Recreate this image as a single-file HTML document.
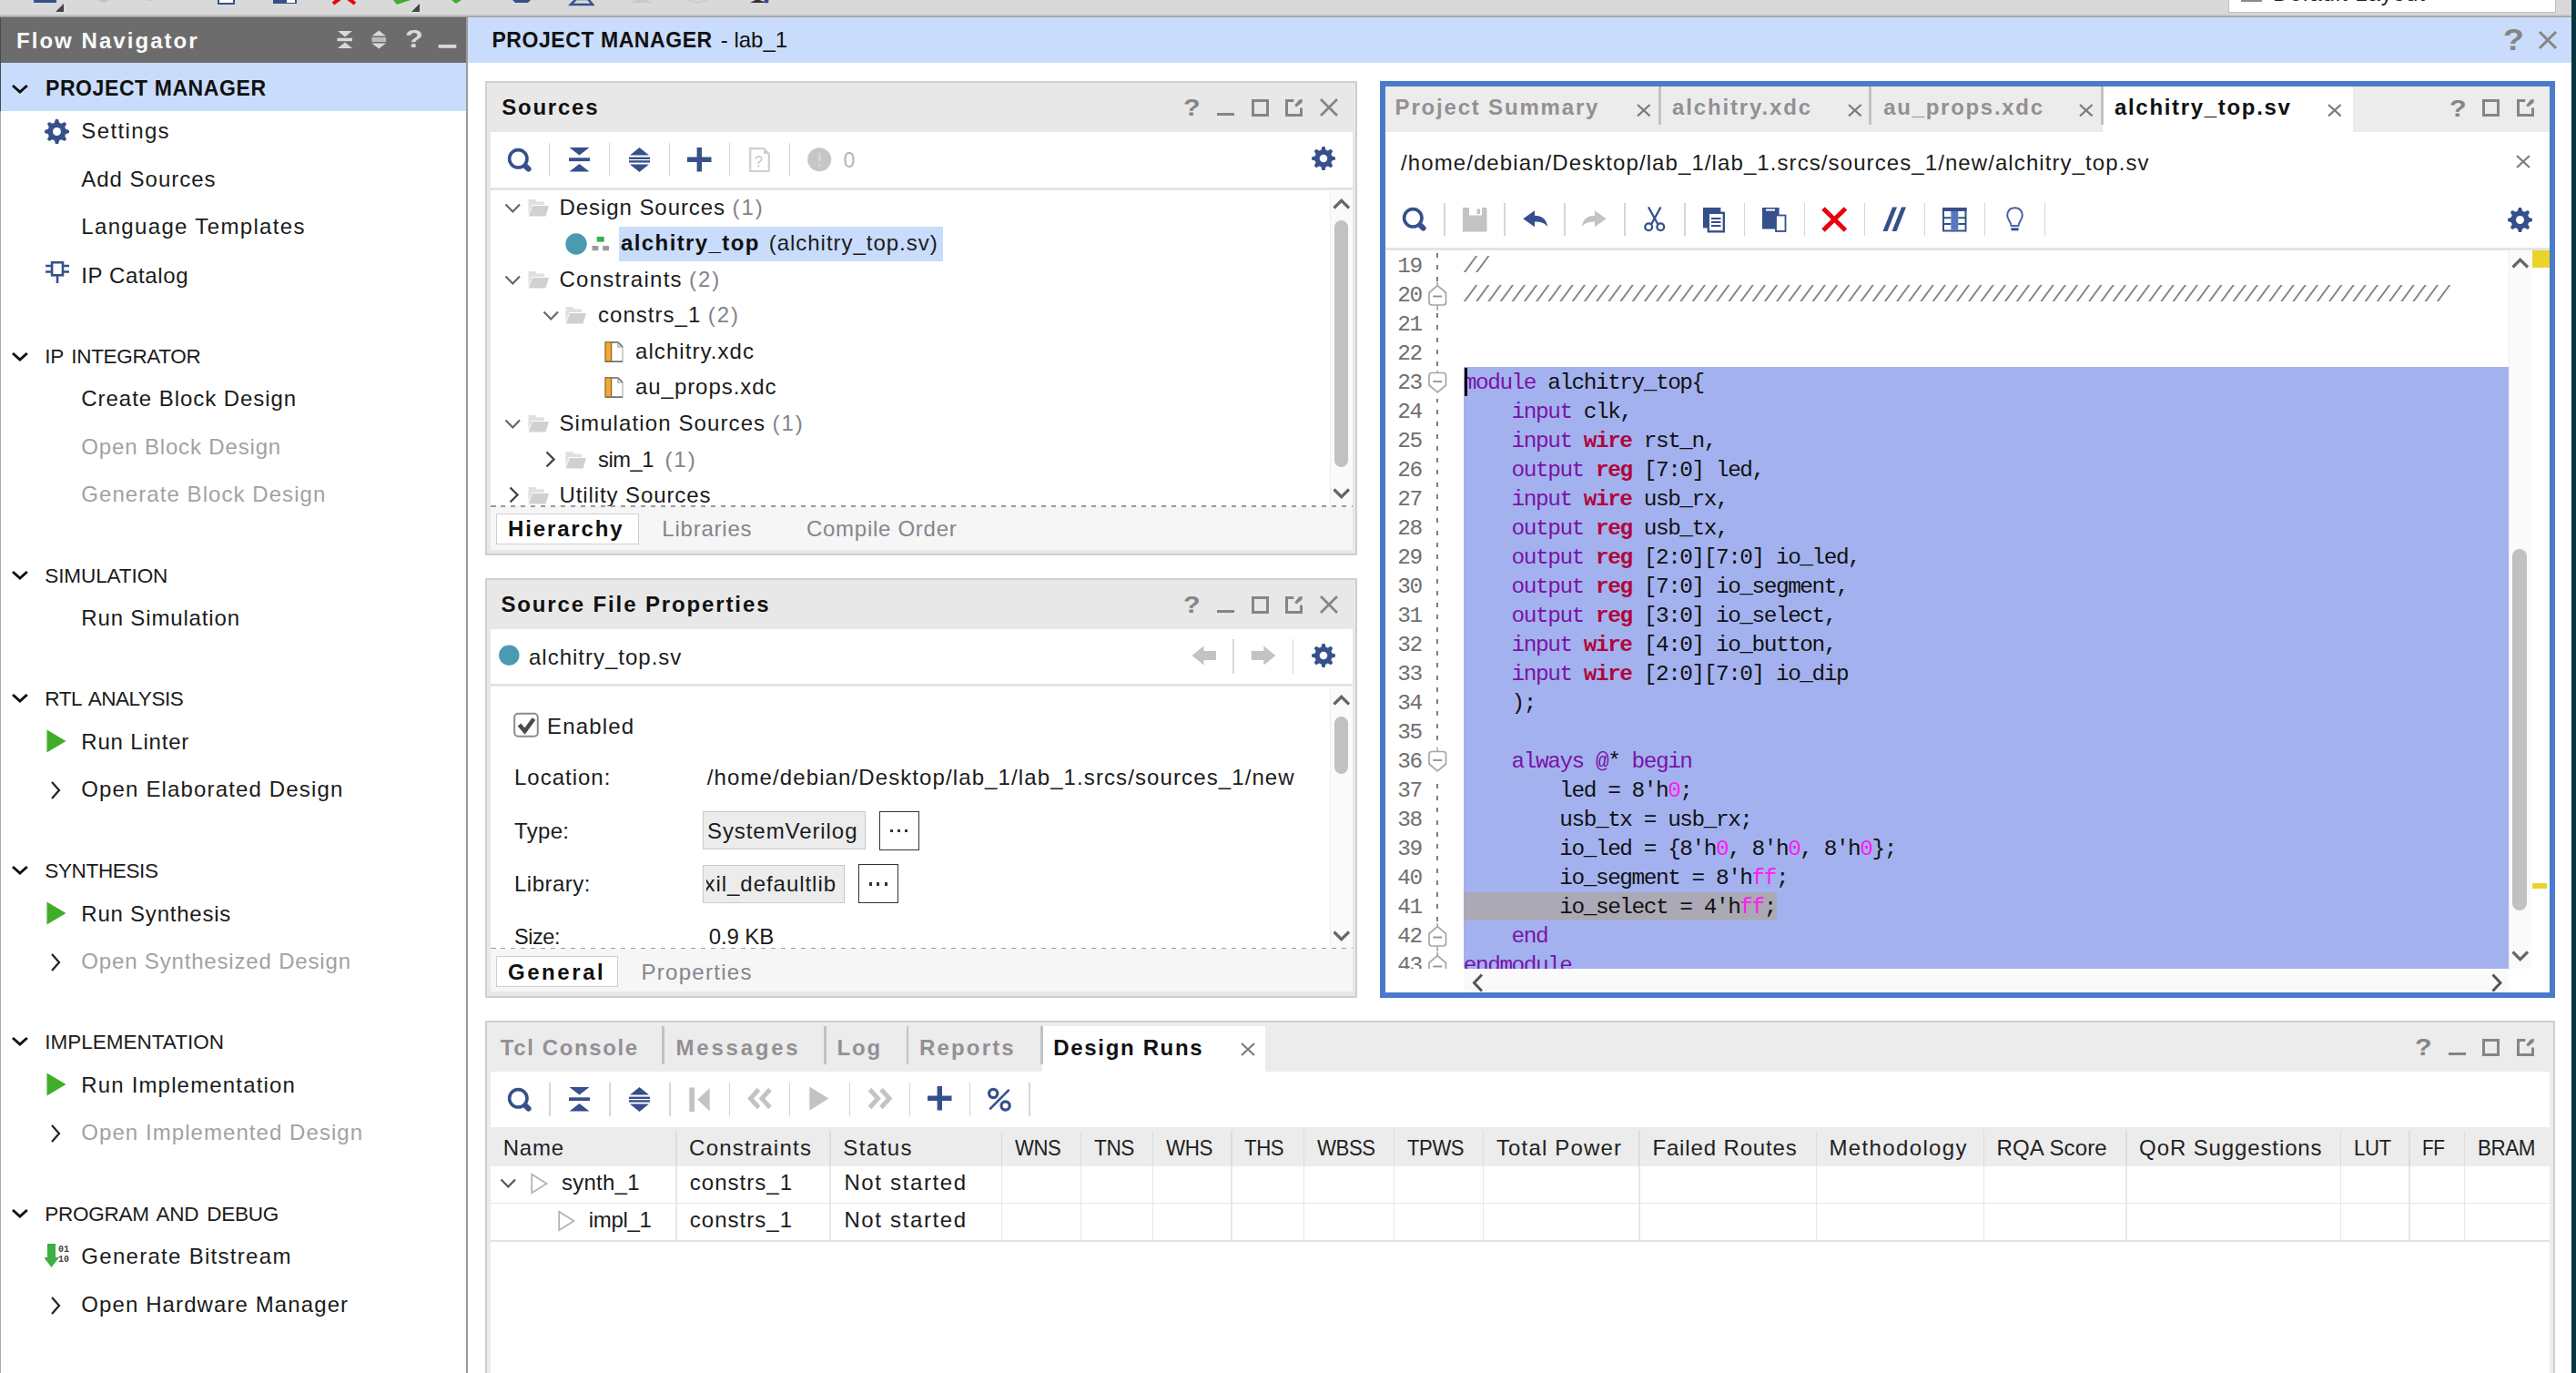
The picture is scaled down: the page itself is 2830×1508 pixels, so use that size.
<!DOCTYPE html>
<html><head><meta charset="utf-8"><title>Vivado</title>
<style>
html,body{margin:0;padding:0;}
html{width:2830px;height:1508px;overflow:hidden;}
body{width:2830px;height:1508px;position:relative;overflow:hidden;background:#fff;font-family:"Liberation Sans",sans-serif;}
div,svg{position:absolute;}
.t{white-space:pre;line-height:1;}
.m{white-space:pre;line-height:1;font-family:"Liberation Mono",monospace;font-size:24.4px;letter-spacing:-1.44px;}
.m b{color:#b0063c;}
.k{color:#7a12a6;}
.n{color:#ff1cf0;}
</style></head><body>
<div style="left:0px;top:0px;width:2830px;height:17px;background:#d9d9d9;"></div>
<div style="left:0px;top:16.3px;width:2830px;height:1.4px;background:#c2c2c2;"></div>
<div style="left:0px;top:17.5px;width:2830px;height:1.6px;background:#9a9a9a;"></div>
<svg style="left:0px;top:0px;" width="900" height="16" viewBox="0 0 900 16">
<rect x="37" y="0" width="25" height="3" fill="#36508c"/>
<path d="M70 4 L70 13 L61 13 Z" fill="#444"/>
<path d="M108 0 l6 3 l6 -3z" fill="#b9c0cf"/><path d="M160 0 l8 1" stroke="#c8c8c8"/>
<rect x="240" y="-2" width="17" height="6" fill="#fff" stroke="#36508c" stroke-width="2"/>
<rect x="300" y="-2" width="26" height="6" fill="#36508c"/><rect x="315" y="0" width="9" height="3" fill="#fff"/>
<path d="M366 4 L374 -2 M390 4 L382 -2" stroke="#e8000b" stroke-width="4"/>
<path d="M432 0 L451 0 L436 5 Z" fill="#3fae2a"/>
<path d="M461 4 L461 13 L452 13 Z" fill="#444"/>
<path d="M496 0 L507 0 L501 4 Z" fill="#3fae2a"/>
<path d="M563 0 h20 l-3 3 h-14 z" fill="#36508c"/>
<path d="M627 5 L633 -1 L646 -1 L651 5 Z" fill="none" stroke="#36508c" stroke-width="2.5"/>
<path d="M692 3 h24 l-6 -3 h-12z" fill="#c9c9c9"/>
<path d="M757 0 l8 3 l12 -3" fill="none" stroke="#cfcfcf" stroke-width="2"/>
<path d="M824 3 l8 -4 l10 4 z" fill="#333"/><circle cx="842" cy="1" r="2.5" fill="#36508c"/>
</svg>
<div style="left:2448px;top:0px;width:360px;height:14px;background:#ffffff;border:1.5px solid #bfbfbf;border-top:none;box-sizing:border-box;"></div>
<div style="left:2462px;top:0px;width:22.5px;height:2.2px;background:#8a8a8a;"></div>
<div class="t" style="left:2497px;top:-18.72px;font-size:24px;letter-spacing:0.942px;color:#222;">Default Layout</div>
<div style="left:0px;top:19px;width:512.2px;height:50.3px;background:#6c6c6c;"></div>
<div style="left:0px;top:69.3px;width:512.2px;height:53px;background:#c9dcfb;"></div>
<div style="left:512.1px;top:19px;width:1.9px;height:1489px;background:#9b9b9b;"></div>
<div style="left:0px;top:19px;width:1.3px;height:103px;background:#3d5058;"></div>
<div style="left:0px;top:122px;width:1.3px;height:1386px;background:#a4adb2;"></div>
<div class="t" style="left:18px;top:32.58px;font-size:24px;letter-spacing:2.045px;color:#fafafa;font-weight:bold;">Flow Navigator</div>
<svg style="left:366px;top:30px;" width="140" height="28" viewBox="0 0 140 28">
<path d="M5 4 H21 L13 10.5 Z M5 23 H21 L13 16.5 Z" fill="#d9d9d9"/><rect x="4.5" y="11.8" width="16.5" height="3.4" fill="#d9d9d9"/>
<path d="M42.5 9.5 H58 L50.2 3.5 Z M42.5 17.5 H58 L50.2 23.5 Z" fill="#d9d9d9"/><rect x="42.5" y="11" width="15.5" height="5" fill="#bcbcbc"/>
<rect x="115.7" y="19" width="19.6" height="3.8" fill="#d9d9d9"/>
</svg>
<div class="t" style="left:445px;top:30.04px;font-size:27px;letter-spacing:0.000px;color:#d9d9d9;font-weight:bold;transform:scaleX(1.2);transform-origin:0 0;">?</div>
<svg style="left:11.5px;top:92.3px;" width="19.8" height="13" viewBox="0 0 19.8 13"><path d="M2 2 L9.9 9 L17.8 2" fill="none" stroke="#111" stroke-width="3"/></svg>
<div class="t" style="left:50px;top:85.83px;font-size:23px;letter-spacing:0.581px;color:#111;font-weight:bold;">PROJECT MANAGER</div>
<div class="t" style="left:89.3px;top:132.48px;font-size:24px;letter-spacing:1.369px;color:#1b1b1b;">Settings</div>
<svg style="left:49px;top:130.8px;" width="27" height="27" viewBox="0 0 26 26"><path d="M11.51 0.09 L14.49 0.09 L15.59 3.65 L17.78 4.56 L21.08 2.81 L23.19 4.92 L21.44 8.22 L22.35 10.41 L25.91 11.51 L25.91 14.49 L22.35 15.59 L21.44 17.78 L23.19 21.08 L21.08 23.19 L17.78 21.44 L15.59 22.35 L14.49 25.91 L11.51 25.91 L10.41 22.35 L8.22 21.44 L4.92 23.19 L2.81 21.08 L4.56 17.78 L3.65 15.59 L0.09 14.49 L0.09 11.51 L3.65 10.41 L4.56 8.22 L2.81 4.92 L4.92 2.81 L8.22 4.56 L10.41 3.65Z" fill="#36508c"/><circle cx="13" cy="13" r="4.3" fill="#fff"/></svg>
<div class="t" style="left:89.3px;top:184.68px;font-size:24px;letter-spacing:0.978px;color:#1b1b1b;">Add Sources</div>
<div class="t" style="left:89.3px;top:237.28px;font-size:24px;letter-spacing:1.338px;color:#1b1b1b;">Language Templates</div>
<div class="t" style="left:89.3px;top:290.88px;font-size:24px;letter-spacing:0.631px;color:#1b1b1b;">IP Catalog</div>
<svg style="left:48.5px;top:285.2px;" width="31" height="31" viewBox="0 0 31 31"><g transform="scale(1.08)" fill="none" stroke="#36508c" stroke-width="2.4"><rect x="7.5" y="3" width="11" height="13"/><path d="M1 6.5 H7.5 M1 12.5 H7.5 M18.5 6.5 H25 M18.5 12.5 H25 M13 16 V24"/></g></svg>
<svg style="left:11.5px;top:385.7px;" width="19.8" height="13" viewBox="0 0 19.8 13"><path d="M2 2 L9.9 9 L17.8 2" fill="none" stroke="#111" stroke-width="3"/></svg>
<div class="t" style="left:49.3px;top:381.35px;font-size:22.5px;letter-spacing:-0.343px;color:#1b1b1b;word-spacing:3px;">IP INTEGRATOR</div>
<div class="t" style="left:89.3px;top:426.08px;font-size:24px;letter-spacing:0.953px;color:#1b1b1b;">Create Block Design</div>
<div class="t" style="left:89.3px;top:478.78px;font-size:24px;letter-spacing:0.842px;color:#a3a1a6;">Open Block Design</div>
<div class="t" style="left:89.3px;top:531.48px;font-size:24px;letter-spacing:1.061px;color:#a3a1a6;">Generate Block Design</div>
<svg style="left:11.5px;top:626.2px;" width="19.8" height="13" viewBox="0 0 19.8 13"><path d="M2 2 L9.9 9 L17.8 2" fill="none" stroke="#111" stroke-width="3"/></svg>
<div class="t" style="left:49.3px;top:621.85px;font-size:22.5px;letter-spacing:-0.094px;color:#1b1b1b;word-spacing:3px;">SIMULATION</div>
<div class="t" style="left:89.3px;top:667.48px;font-size:24px;letter-spacing:0.844px;color:#1b1b1b;">Run Simulation</div>
<svg style="left:11.5px;top:761.2px;" width="19.8" height="13" viewBox="0 0 19.8 13"><path d="M2 2 L9.9 9 L17.8 2" fill="none" stroke="#111" stroke-width="3"/></svg>
<div class="t" style="left:49.3px;top:756.85px;font-size:22.5px;letter-spacing:-0.476px;color:#1b1b1b;word-spacing:3px;">RTL ANALYSIS</div>
<div class="t" style="left:89.3px;top:802.78px;font-size:24px;letter-spacing:0.809px;color:#1b1b1b;">Run Linter</div>
<svg style="left:51px;top:800.8px;" width="24" height="26" viewBox="0 0 24 26"><path d="M0.5 0.5 L21.5 13 L0.5 25.5 Z" fill="#41ad2a"/></svg>
<div class="t" style="left:89.3px;top:855.48px;font-size:24px;letter-spacing:1.147px;color:#1b1b1b;">Open Elaborated Design</div>
<svg style="left:54.8px;top:857.3px;" width="14" height="22" viewBox="0 0 14 22"><path d="M2 2 L10 11 L2 20" fill="none" stroke="#222" stroke-width="2.2"/></svg>
<svg style="left:11.5px;top:950.2px;" width="19.8" height="13" viewBox="0 0 19.8 13"><path d="M2 2 L9.9 9 L17.8 2" fill="none" stroke="#111" stroke-width="3"/></svg>
<div class="t" style="left:49.3px;top:945.85px;font-size:22.5px;letter-spacing:-0.350px;color:#1b1b1b;word-spacing:3px;">SYNTHESIS</div>
<div class="t" style="left:89.3px;top:991.78px;font-size:24px;letter-spacing:0.772px;color:#1b1b1b;">Run Synthesis</div>
<svg style="left:51px;top:989.8px;" width="24" height="26" viewBox="0 0 24 26"><path d="M0.5 0.5 L21.5 13 L0.5 25.5 Z" fill="#41ad2a"/></svg>
<div class="t" style="left:89.3px;top:1044.48px;font-size:24px;letter-spacing:0.829px;color:#a3a1a6;">Open Synthesized Design</div>
<svg style="left:54.8px;top:1046.3px;" width="14" height="22" viewBox="0 0 14 22"><path d="M2 2 L10 11 L2 20" fill="none" stroke="#222" stroke-width="2.2"/></svg>
<svg style="left:11.5px;top:1138.2px;" width="19.8" height="13" viewBox="0 0 19.8 13"><path d="M2 2 L9.9 9 L17.8 2" fill="none" stroke="#111" stroke-width="3"/></svg>
<div class="t" style="left:49.3px;top:1133.85px;font-size:22.5px;letter-spacing:-0.006px;color:#1b1b1b;word-spacing:3px;">IMPLEMENTATION</div>
<div class="t" style="left:89.3px;top:1179.68px;font-size:24px;letter-spacing:1.161px;color:#1b1b1b;">Run Implementation</div>
<svg style="left:51px;top:1177.7px;" width="24" height="26" viewBox="0 0 24 26"><path d="M0.5 0.5 L21.5 13 L0.5 25.5 Z" fill="#41ad2a"/></svg>
<div class="t" style="left:89.3px;top:1232.48px;font-size:24px;letter-spacing:1.061px;color:#a3a1a6;">Open Implemented Design</div>
<svg style="left:54.8px;top:1234.3px;" width="14" height="22" viewBox="0 0 14 22"><path d="M2 2 L10 11 L2 20" fill="none" stroke="#222" stroke-width="2.2"/></svg>
<svg style="left:11.5px;top:1327.2px;" width="19.8" height="13" viewBox="0 0 19.8 13"><path d="M2 2 L9.9 9 L17.8 2" fill="none" stroke="#111" stroke-width="3"/></svg>
<div class="t" style="left:49.3px;top:1322.85px;font-size:22.5px;letter-spacing:-0.257px;color:#1b1b1b;word-spacing:3px;">PROGRAM AND DEBUG</div>
<div class="t" style="left:89.3px;top:1368.48px;font-size:24px;letter-spacing:1.294px;color:#1b1b1b;">Generate Bitstream</div>
<svg style="left:49px;top:1365.5px;" width="30" height="30" viewBox="0 0 30 30"><path d="M3 0 H12 V15 H16 L7.5 26 L-1 15 H3 Z" fill="#3fae45"/><g fill="#444" font-family="Liberation Mono" font-size="10" font-weight="bold"><text x="15" y="9">01</text><text x="15" y="20">10</text></g></svg>
<div class="t" style="left:89.3px;top:1421.28px;font-size:24px;letter-spacing:1.100px;color:#1b1b1b;">Open Hardware Manager</div>
<svg style="left:54.8px;top:1423.1px;" width="14" height="22" viewBox="0 0 14 22"><path d="M2 2 L10 11 L2 20" fill="none" stroke="#222" stroke-width="2.2"/></svg>
<div style="left:514px;top:19px;width:2312px;height:50.4px;background:#c9dcfb;"></div>
<div style="left:2825px;top:0px;width:5px;height:1508px;background:#0b3442;"></div>
<div class="t" style="left:540.4px;top:32.53px;font-size:23px;letter-spacing:0.567px;color:#111;font-weight:bold;">PROJECT MANAGER</div>
<div class="t" style="left:791.7px;top:31.68px;font-size:24px;letter-spacing:0.021px;color:#111;">- lab_1</div>
<div class="t" style="left:2750px;top:26.84px;font-size:33.5px;color:#858585;font-weight:bold;transform:scaleX(1.12);transform-origin:0 0;">?</div>
<svg style="left:2788px;top:32.8px;" width="22" height="22" viewBox="0 0 22 22"><path d="M2 2 L20 20 M20 2 L2 20" stroke="#858585" stroke-width="3" fill="none"/></svg>
<div style="left:533px;top:88.5px;width:958.4px;height:521.5px;background:#e8e8e8;border:2px solid #cfcfcf;box-sizing:border-box;"></div>
<div style="left:538.5px;top:145px;width:947.4px;height:458.5px;background:#fff;"></div>
<div class="t" style="left:551.2px;top:105.68px;font-size:24px;letter-spacing:1.783px;color:#111;font-weight:bold;">Sources</div>
<div class="t" style="left:1300px;top:106.44px;font-size:25px;color:#858585;font-weight:bold;transform:scaleX(1.22);transform-origin:0 0;">?</div>
<div style="left:1337px;top:124.1px;width:19px;height:3px;background:#858585;"></div>
<div style="left:1374.6px;top:108.6px;width:19px;height:19px;background:transparent;border:3px solid #858585;box-sizing:border-box;"></div>
<svg style="left:1412px;top:107.6px;" width="21" height="21" viewBox="0 0 21 21"><path d="M9.3 2.5 H1.5 V18.5 H17.5 V10.5" fill="none" stroke="#858585" stroke-width="3"/><path d="M10.3 7.6 L15.2 1.6 L19 1 L18.4 4.8 L12.2 9.4 Z" fill="#858585"/></svg>
<svg style="left:1448.5px;top:107.1px;" width="22" height="22" viewBox="0 0 22 22"><path d="M2 2 L20 20 M20 2 L2 20" stroke="#858585" stroke-width="2.8" fill="none"/></svg>
<svg style="left:557.3px;top:161.7px;" width="30" height="30" viewBox="0 0 30 30"><circle cx="12.3" cy="12.3" r="9.7" fill="none" stroke="#36508c" stroke-width="3.6"/><path d="M20.3 20.3 L23.6 23.6" stroke="#36508c" stroke-width="6" stroke-linecap="round"/></svg>
<svg style="left:625.3px;top:162px;" width="24" height="28" viewBox="0 0 24 28"><path d="M0.5 0 H22.5 L11.5 8.5 Z M0.5 26.5 H22.5 L11.5 18 Z" fill="#36508c"/><rect x="0" y="11.3" width="23" height="3.8" fill="#36508c"/></svg>
<svg style="left:691px;top:162px;" width="24" height="28" viewBox="0 0 24 28"><path d="M1 8.5 H22 L11.5 0 Z M1 18.5 H22 L11.5 27 Z" fill="#36508c"/><rect x="0" y="10.6" width="23" height="2.4" fill="#36508c"/><rect x="0" y="14.2" width="23" height="2.4" fill="#36508c"/></svg>
<svg style="left:755px;top:161.8px;" width="27" height="27" viewBox="0 0 27 27"><path d="M13.3 0 V26.5 M0 13.3 H26.5" stroke="#36508c" stroke-width="5.4"/></svg>
<div style="left:602.8px;top:156.7px;width:1.6px;height:36.7px;background:#d6d6d6;"></div>
<div style="left:668.8px;top:156.7px;width:1.6px;height:36.7px;background:#d6d6d6;"></div>
<div style="left:734.8px;top:156.7px;width:1.6px;height:36.7px;background:#d6d6d6;"></div>
<div style="left:800.8px;top:156.7px;width:1.6px;height:36.7px;background:#d6d6d6;"></div>
<div style="left:866.8px;top:156.7px;width:1.6px;height:36.7px;background:#d6d6d6;"></div>
<svg style="left:823px;top:161.5px;" width="24" height="28" viewBox="0 0 24 28"><path d="M1.2 1.2 H16 L21.8 7 V26 H1.2 Z" fill="#fff" stroke="#cfcfcf" stroke-width="2.2"/><path d="M16 1.2 V7 H21.8 Z" fill="#cfcfcf"/><text x="6" y="21" font-family="Liberation Sans" font-size="16" fill="#c4c4c4">?</text></svg>
<svg style="left:887px;top:162px;" width="27" height="27" viewBox="0 0 27 27"><circle cx="13.2" cy="13.2" r="13" fill="#c6c6c6"/><rect x="12" y="6" width="2.6" height="9.5" fill="#d6d6d6"/><rect x="12" y="18" width="2.6" height="2.8" fill="#d6d6d6"/></svg>
<div class="t" style="left:926.5px;top:164.83px;font-size:23px;letter-spacing:0.000px;color:#b4b4b4;">0</div>
<svg style="left:1441px;top:161.3px;" width="26" height="26" viewBox="0 0 26 26"><path d="M11.51 0.09 L14.49 0.09 L15.59 3.65 L17.78 4.56 L21.08 2.81 L23.19 4.92 L21.44 8.22 L22.35 10.41 L25.91 11.51 L25.91 14.49 L22.35 15.59 L21.44 17.78 L23.19 21.08 L21.08 23.19 L17.78 21.44 L15.59 22.35 L14.49 25.91 L11.51 25.91 L10.41 22.35 L8.22 21.44 L4.92 23.19 L2.81 21.08 L4.56 17.78 L3.65 15.59 L0.09 14.49 L0.09 11.51 L3.65 10.41 L4.56 8.22 L2.81 4.92 L4.92 2.81 L8.22 4.56 L10.41 3.65Z" fill="#36508c"/><circle cx="13" cy="13" r="4.3" fill="#fff"/></svg>
<div style="left:538.5px;top:205.9px;width:947px;height:3px;background:#e4e4e4;"></div>
<div style="left:679.7px;top:249px;width:356px;height:38px;background:#c9dcfb;"></div>
<svg style="left:553.5px;top:222.8px;" width="20" height="12" viewBox="0 0 20 12"><path d="M1.5 1.5 L9.3 9.5 L17 1.5" fill="none" stroke="#666" stroke-width="2.2"/></svg>
<svg style="left:580px;top:217.8px;" width="24" height="21" viewBox="0 0 24 21"><path d="M0.5 1 H8 L10 3.5 H18 V7 H4.5 L0.5 18 Z" fill="#e0e0e0"/><path d="M5 8 H23 L19.5 19.5 H0.8 Z" fill="#d0d0d0"/></svg>
<div class="t" style="left:614.5px;top:215.68px;font-size:24px;letter-spacing:0.935px;color:#1b1b1b;">Design Sources</div>
<div class="t" style="left:804.531px;top:215.68px;font-size:24px;letter-spacing:1.977px;color:#85828c;">(1)</div>
<svg style="left:620.5px;top:255.35px;" width="50" height="26" viewBox="0 0 50 26"><circle cx="12" cy="13" r="11.7" fill="#4a9bb1"/><rect x="34.7" y="5" width="8" height="5.6" fill="#35b04f"/><rect x="29.5" y="15" width="6.8" height="5.2" fill="#9a9a9a"/><rect x="41.2" y="15" width="6.8" height="5.2" fill="#9a9a9a"/></svg>
<div class="t" style="left:682px;top:255.23px;font-size:24px;letter-spacing:1.406px;color:#111;font-weight:bold;">alchitry_top</div>
<div class="t" style="left:844.7px;top:255.23px;font-size:24px;letter-spacing:0.976px;color:#1b1b1b;">(alchitry_top.sv)</div>
<svg style="left:553.5px;top:301.9px;" width="20" height="12" viewBox="0 0 20 12"><path d="M1.5 1.5 L9.3 9.5 L17 1.5" fill="none" stroke="#666" stroke-width="2.2"/></svg>
<svg style="left:580px;top:296.9px;" width="24" height="21" viewBox="0 0 24 21"><path d="M0.5 1 H8 L10 3.5 H18 V7 H4.5 L0.5 18 Z" fill="#e0e0e0"/><path d="M5 8 H23 L19.5 19.5 H0.8 Z" fill="#d0d0d0"/></svg>
<div class="t" style="left:614.5px;top:294.78px;font-size:24px;letter-spacing:1.272px;color:#1b1b1b;">Constraints</div>
<div class="t" style="left:757.062px;top:294.78px;font-size:24px;letter-spacing:1.977px;color:#85828c;">(2)</div>
<svg style="left:595.5px;top:341.45px;" width="20" height="12" viewBox="0 0 20 12"><path d="M1.5 1.5 L9.3 9.5 L17 1.5" fill="none" stroke="#666" stroke-width="2.2"/></svg>
<svg style="left:620.5px;top:336.45px;" width="24" height="21" viewBox="0 0 24 21"><path d="M0.5 1 H8 L10 3.5 H18 V7 H4.5 L0.5 18 Z" fill="#e0e0e0"/><path d="M5 8 H23 L19.5 19.5 H0.8 Z" fill="#d0d0d0"/></svg>
<div class="t" style="left:657px;top:334.33px;font-size:24px;letter-spacing:1.027px;color:#1b1b1b;">constrs_1</div>
<div class="t" style="left:777.734px;top:334.33px;font-size:24px;letter-spacing:1.977px;color:#85828c;">(2)</div>
<svg style="left:663.5px;top:374.7px;" width="22" height="24" viewBox="0 0 22 24"><path d="M7 1 H15 L20 6 V22 H7 Z" fill="#fff" stroke="#c4c4c4" stroke-width="1.6"/><path d="M7 1 H15 L20 6" fill="none" stroke="#6f6f6f" stroke-width="1.5"/><path d="M15 1 V6 H20" fill="none" stroke="#9a9a9a" stroke-width="1.2"/><path d="M1 22.2 H20" stroke="#6f6f6f" stroke-width="1.6"/><rect x="1" y="0.8" width="6.6" height="21.2" fill="#f5a82f" stroke="#8a6a3a" stroke-width="1.3"/></svg>
<div class="t" style="left:698px;top:373.88px;font-size:24px;letter-spacing:1.068px;color:#1b1b1b;">alchitry.xdc</div>
<svg style="left:663.5px;top:414.25px;" width="22" height="24" viewBox="0 0 22 24"><path d="M7 1 H15 L20 6 V22 H7 Z" fill="#fff" stroke="#c4c4c4" stroke-width="1.6"/><path d="M7 1 H15 L20 6" fill="none" stroke="#6f6f6f" stroke-width="1.5"/><path d="M15 1 V6 H20" fill="none" stroke="#9a9a9a" stroke-width="1.2"/><path d="M1 22.2 H20" stroke="#6f6f6f" stroke-width="1.6"/><rect x="1" y="0.8" width="6.6" height="21.2" fill="#f5a82f" stroke="#8a6a3a" stroke-width="1.3"/></svg>
<div class="t" style="left:698px;top:413.43px;font-size:24px;letter-spacing:0.947px;color:#1b1b1b;">au_props.xdc</div>
<svg style="left:553.5px;top:460.1px;" width="20" height="12" viewBox="0 0 20 12"><path d="M1.5 1.5 L9.3 9.5 L17 1.5" fill="none" stroke="#666" stroke-width="2.2"/></svg>
<svg style="left:580px;top:455.1px;" width="24" height="21" viewBox="0 0 24 21"><path d="M0.5 1 H8 L10 3.5 H18 V7 H4.5 L0.5 18 Z" fill="#e0e0e0"/><path d="M5 8 H23 L19.5 19.5 H0.8 Z" fill="#d0d0d0"/></svg>
<div class="t" style="left:614.5px;top:452.98px;font-size:24px;letter-spacing:1.108px;color:#1b1b1b;">Simulation Sources</div>
<div class="t" style="left:848.578px;top:452.98px;font-size:24px;letter-spacing:1.977px;color:#85828c;">(1)</div>
<svg style="left:599px;top:494.85px;" width="12" height="20" viewBox="0 0 12 20"><path d="M1.5 1.5 L9.5 9.5 L1.5 17.5" fill="none" stroke="#444" stroke-width="2.4"/></svg>
<svg style="left:620.5px;top:494.65px;" width="24" height="21" viewBox="0 0 24 21"><path d="M0.5 1 H8 L10 3.5 H18 V7 H4.5 L0.5 18 Z" fill="#e0e0e0"/><path d="M5 8 H23 L19.5 19.5 H0.8 Z" fill="#d0d0d0"/></svg>
<div class="t" style="left:657px;top:492.53px;font-size:24px;letter-spacing:-0.450px;color:#1b1b1b;transform:scaleX(0.9885);transform-origin:0 0;">sim_1</div>
<div class="t" style="left:730.4px;top:492.53px;font-size:24px;letter-spacing:1.977px;color:#85828c;">(1)</div>
<div style="left:538.5px;top:530px;width:922px;height:26px;overflow:hidden;">
<svg style="left:20.5px;top:4.4px;" width="12" height="20" viewBox="0 0 12 20"><path d="M1.5 1.5 L9.5 9.5 L1.5 17.5" fill="none" stroke="#444" stroke-width="2.4"/></svg>
<svg style="left:41.5px;top:4.2px;" width="24" height="21" viewBox="0 0 24 21"><path d="M0.5 1 H8 L10 3.5 H18 V7 H4.5 L0.5 18 Z" fill="#e0e0e0"/><path d="M5 8 H23 L19.5 19.5 H0.8 Z" fill="#d0d0d0"/></svg>
<div class="t" style="left:76px;top:2.08px;font-size:24px;letter-spacing:0.902px;color:#1b1b1b;">Utility Sources</div>
</div>
<div style="left:1461px;top:209.5px;width:25px;height:346.5px;background:#fafafa;border-left:1px solid #ececec;box-sizing:border-box;"></div>
<svg style="left:1464.2px;top:217.8px;" width="20" height="13" viewBox="0 0 20 13"><path d="M1.5 10.5 L9.7 2.3 L18 10.5" fill="none" stroke="#666" stroke-width="3.2"/></svg>
<svg style="left:1464.2px;top:536.3px;" width="20" height="13" viewBox="0 0 20 13"><path d="M1.5 1.5 L9.7 9.7 L18 1.5" fill="none" stroke="#666" stroke-width="3.2"/></svg>
<div style="left:1465.7px;top:241.7px;width:15.5px;height:270.9px;background:#c1c1c1;border-radius:8px;"></div>
<div style="left:538.5px;top:556px;width:947px;height:47.5px;background:#f6f6f6;"></div>
<div style="left:538.5px;top:555.2px;width:947px;height:1.6px;background:transparent;background-image:repeating-linear-gradient(90deg,#9a9a9a 0 5.5px,transparent 5.5px 11px);"></div>
<div style="left:544.7px;top:564px;width:157px;height:34.2px;background:#fff;border:1.3px solid #cfcfcf;box-sizing:border-box;"></div>
<div class="t" style="left:558px;top:569.48px;font-size:24px;letter-spacing:1.860px;color:#111;font-weight:bold;">Hierarchy</div>
<div class="t" style="left:727.3px;top:569.48px;font-size:24px;letter-spacing:0.771px;color:#88848c;">Libraries</div>
<div class="t" style="left:886px;top:569.48px;font-size:24px;letter-spacing:0.721px;color:#88848c;">Compile Order</div>
<div style="left:533px;top:635px;width:958.4px;height:460.5px;background:#e8e8e8;border:2px solid #cfcfcf;box-sizing:border-box;"></div>
<div style="left:538.5px;top:691px;width:947.4px;height:398px;background:#fff;"></div>
<div class="t" style="left:550.4px;top:651.88px;font-size:24px;letter-spacing:1.873px;color:#111;font-weight:bold;">Source File Properties</div>
<div class="t" style="left:1300px;top:652.44px;font-size:25px;color:#858585;font-weight:bold;transform:scaleX(1.22);transform-origin:0 0;">?</div>
<div style="left:1337px;top:670.1px;width:19px;height:3px;background:#858585;"></div>
<div style="left:1374.6px;top:654.6px;width:19px;height:19px;background:transparent;border:3px solid #858585;box-sizing:border-box;"></div>
<svg style="left:1412px;top:653.6px;" width="21" height="21" viewBox="0 0 21 21"><path d="M9.3 2.5 H1.5 V18.5 H17.5 V10.5" fill="none" stroke="#858585" stroke-width="3"/><path d="M10.3 7.6 L15.2 1.6 L19 1 L18.4 4.8 L12.2 9.4 Z" fill="#858585"/></svg>
<svg style="left:1448.5px;top:653.1px;" width="22" height="22" viewBox="0 0 22 22"><path d="M2 2 L20 20 M20 2 L2 20" stroke="#858585" stroke-width="2.8" fill="none"/></svg>
<svg style="left:548.3px;top:708px;" width="24" height="24" viewBox="0 0 24 24"><circle cx="11.3" cy="11.7" r="11.2" fill="#4a9bb1"/></svg>
<div class="t" style="left:581px;top:709.98px;font-size:24px;letter-spacing:0.994px;color:#1b1b1b;">alchitry_top.sv</div>
<svg style="left:1309px;top:708px;" width="28" height="24" viewBox="0 0 28 24"><path d="M0.5 12 L13.5 1.5 V7 H27 V17 H13.5 V22.5 Z" fill="#c3c3c3"/></svg>
<svg style="left:1374px;top:708px;" width="28" height="24" viewBox="0 0 28 24"><path d="M27.3 12 L14.3 1.5 V7 H0.8 V17 H14.3 V22.5 Z" fill="#c3c3c3"/></svg>
<div style="left:1354.2px;top:701.5px;width:1.6px;height:38px;background:#d6d6d6;"></div>
<div style="left:1419.7px;top:701.5px;width:1.6px;height:38px;background:#d6d6d6;"></div>
<svg style="left:1440.8px;top:707px;" width="26" height="26" viewBox="0 0 26 26"><path d="M11.51 0.09 L14.49 0.09 L15.59 3.65 L17.78 4.56 L21.08 2.81 L23.19 4.92 L21.44 8.22 L22.35 10.41 L25.91 11.51 L25.91 14.49 L22.35 15.59 L21.44 17.78 L23.19 21.08 L21.08 23.19 L17.78 21.44 L15.59 22.35 L14.49 25.91 L11.51 25.91 L10.41 22.35 L8.22 21.44 L4.92 23.19 L2.81 21.08 L4.56 17.78 L3.65 15.59 L0.09 14.49 L0.09 11.51 L3.65 10.41 L4.56 8.22 L2.81 4.92 L4.92 2.81 L8.22 4.56 L10.41 3.65Z" fill="#36508c"/><circle cx="13" cy="13" r="4.3" fill="#fff"/></svg>
<div style="left:538.5px;top:751px;width:947px;height:3px;background:#e4e4e4;"></div>
<div style="left:1461px;top:754.5px;width:25px;height:287.2px;background:#fafafa;border-left:1px solid #ececec;box-sizing:border-box;"></div>
<svg style="left:1464.2px;top:762.8px;" width="20" height="13" viewBox="0 0 20 13"><path d="M1.5 10.5 L9.7 2.3 L18 10.5" fill="none" stroke="#666" stroke-width="3.2"/></svg>
<svg style="left:1464.2px;top:1022px;" width="20" height="13" viewBox="0 0 20 13"><path d="M1.5 1.5 L9.7 9.7 L18 1.5" fill="none" stroke="#666" stroke-width="3.2"/></svg>
<div style="left:1465.7px;top:787.4px;width:15.5px;height:62.8px;background:#c1c1c1;border-radius:8px;"></div>
<svg style="left:564px;top:782px;" width="30" height="30" viewBox="0 0 30 30"><rect x="1.2" y="1.8" width="25.6" height="25" rx="4" fill="#fff" stroke="#8c8c8c" stroke-width="2"/><path d="M6.5 14 L12.5 21 L22.5 7.5" fill="none" stroke="#4a4a4a" stroke-width="4.6"/></svg>
<div class="t" style="left:601px;top:786.08px;font-size:24px;letter-spacing:1.156px;color:#1b1b1b;">Enabled</div>
<div class="t" style="left:565px;top:842.38px;font-size:24px;letter-spacing:0.989px;color:#1b1b1b;">Location:</div>
<div class="t" style="left:776.8px;top:842.38px;font-size:24px;letter-spacing:1.103px;color:#1b1b1b;">/home/debian/Desktop/lab_1/lab_1.srcs/sources_1/new</div>
<div class="t" style="left:565px;top:900.68px;font-size:24px;letter-spacing:0.328px;color:#1b1b1b;">Type:</div>
<div style="left:772.2px;top:891.4px;width:178.8px;height:42px;background:#ececec;border:1.3px solid #c9c9c9;box-sizing:border-box;"></div>
<div class="t" style="left:777px;top:900.68px;font-size:24px;letter-spacing:0.924px;color:#1b1b1b;">SystemVerilog</div>
<div style="left:966px;top:890.7px;width:43.6px;height:43.3px;background:#fff;border:1.6px solid #333;box-sizing:border-box;"></div>
<div style="left:977.6px;top:910.95px;width:3.2px;height:3.2px;background:#333;"></div>
<div style="left:985.9px;top:910.95px;width:3.2px;height:3.2px;background:#333;"></div>
<div style="left:994.2px;top:910.95px;width:3.2px;height:3.2px;background:#333;"></div>
<div class="t" style="left:565px;top:959.38px;font-size:24px;letter-spacing:0.496px;color:#1b1b1b;">Library:</div>
<div style="left:772.2px;top:949.6px;width:156px;height:42px;background:#ececec;border:1.3px solid #c9c9c9;box-sizing:border-box;"></div>
<div style="left:776px;top:952px;width:150px;height:38px;overflow:hidden;">
<div class="t" style="left:-2.5px;top:7.38px;font-size:24px;letter-spacing:0.958px;color:#1b1b1b;">xil_defaultlib</div>
</div>
<div style="left:943.4px;top:949.2px;width:43.6px;height:43.3px;background:#fff;border:1.6px solid #333;box-sizing:border-box;"></div>
<div style="left:955px;top:969.45px;width:3.2px;height:3.2px;background:#333;"></div>
<div style="left:963.3px;top:969.45px;width:3.2px;height:3.2px;background:#333;"></div>
<div style="left:971.6px;top:969.45px;width:3.2px;height:3.2px;background:#333;"></div>
<div style="left:538.5px;top:1010px;width:922px;height:31px;overflow:hidden;">
<div class="t" style="left:26.5px;top:6.98px;font-size:24px;letter-spacing:-0.450px;color:#1b1b1b;transform:scaleX(0.9795);transform-origin:0 0;">Size:</div>
<div class="t" style="left:240.2px;top:6.98px;font-size:24px;letter-spacing:-0.113px;color:#1b1b1b;">0.9 KB</div>
</div>
<div style="left:538.5px;top:1041.7px;width:947px;height:47.5px;background:#f6f6f6;"></div>
<div style="left:538.5px;top:1040.9px;width:947px;height:1.6px;background:transparent;background-image:repeating-linear-gradient(90deg,#9a9a9a 0 5.5px,transparent 5.5px 11px);"></div>
<div style="left:544.7px;top:1050.4px;width:134.3px;height:33.6px;background:#fff;border:1.3px solid #cfcfcf;box-sizing:border-box;"></div>
<div class="t" style="left:558px;top:1055.98px;font-size:24px;letter-spacing:2.554px;color:#111;font-weight:bold;">General</div>
<div class="t" style="left:704.5px;top:1055.98px;font-size:24px;letter-spacing:1.290px;color:#88848c;">Properties</div>
<div style="left:1516px;top:88.5px;width:1291px;height:1007.5px;background:#fff;border:6px solid #4a7acb;box-sizing:border-box;"></div>
<div style="left:1522px;top:94.5px;width:1279px;height:50.5px;background:#ececec;"></div>
<div style="left:2310px;top:94.5px;width:274.5px;height:50.5px;background:#fff;"></div>
<div class="t" style="left:1532.6px;top:105.98px;font-size:24px;letter-spacing:1.812px;color:#948f95;font-weight:bold;">Project Summary</div>
<div class="t" style="left:1837px;top:105.98px;font-size:24px;letter-spacing:1.854px;color:#948f95;font-weight:bold;">alchitry.xdc</div>
<div class="t" style="left:2069.3px;top:105.98px;font-size:24px;letter-spacing:1.699px;color:#948f95;font-weight:bold;">au_props.xdc</div>
<div class="t" style="left:2323px;top:105.98px;font-size:24px;letter-spacing:1.679px;color:#111;font-weight:bold;">alchitry_top.sv</div>
<svg style="left:1797.3px;top:112.8px;" width="17.6" height="16.4" viewBox="0 0 17.6 16.4"><path d="M2 2 L15.6 14.4 M15.6 2 L2 14.4" stroke="#7c7c7c" stroke-width="2.2" fill="none"/></svg>
<svg style="left:2028.6px;top:112.8px;" width="17.6" height="16.4" viewBox="0 0 17.6 16.4"><path d="M2 2 L15.6 14.4 M15.6 2 L2 14.4" stroke="#7c7c7c" stroke-width="2.2" fill="none"/></svg>
<svg style="left:2282.8px;top:112.8px;" width="17.6" height="16.4" viewBox="0 0 17.6 16.4"><path d="M2 2 L15.6 14.4 M15.6 2 L2 14.4" stroke="#7c7c7c" stroke-width="2.2" fill="none"/></svg>
<svg style="left:2555.8px;top:112.8px;" width="17.6" height="16.4" viewBox="0 0 17.6 16.4"><path d="M2 2 L15.6 14.4 M15.6 2 L2 14.4" stroke="#7c7c7c" stroke-width="2.2" fill="none"/></svg>
<div style="left:1821.5px;top:95px;width:3px;height:42px;background:#c2c2c2;"></div>
<div style="left:2052.8px;top:95px;width:3px;height:42px;background:#c2c2c2;"></div>
<div style="left:2307.5px;top:95px;width:3px;height:42px;background:#c2c2c2;"></div>
<div class="t" style="left:2691px;top:106.84px;font-size:25px;color:#858585;font-weight:bold;transform:scaleX(1.22);transform-origin:0 0;">?</div>
<div style="left:2727px;top:109px;width:19px;height:19px;background:transparent;border:3px solid #858585;box-sizing:border-box;"></div>
<svg style="left:2764.5px;top:108px;" width="21" height="21" viewBox="0 0 21 21"><path d="M9.3 2.5 H1.5 V18.5 H17.5 V10.5" fill="none" stroke="#858585" stroke-width="3"/><path d="M10.3 7.6 L15.2 1.6 L19 1 L18.4 4.8 L12.2 9.4 Z" fill="#858585"/></svg>
<div class="t" style="left:1539px;top:166.88px;font-size:24px;letter-spacing:1.088px;color:#1b1b1b;">/home/debian/Desktop/lab_1/lab_1.srcs/sources_1/new/alchitry_top.sv</div>
<svg style="left:2762.8px;top:168.8px;" width="18" height="17" viewBox="0 0 18 17"><path d="M2 2 L16 15 M16 2 L2 15" stroke="#7c7c7c" stroke-width="2.2" fill="none"/></svg>
<div style="left:1586.2px;top:222.7px;width:1.6px;height:36.6px;background:#d6d6d6;"></div>
<div style="left:1652.13px;top:222.7px;width:1.6px;height:36.6px;background:#d6d6d6;"></div>
<div style="left:1718.06px;top:222.7px;width:1.6px;height:36.6px;background:#d6d6d6;"></div>
<div style="left:1783.99px;top:222.7px;width:1.6px;height:36.6px;background:#d6d6d6;"></div>
<div style="left:1849.92px;top:222.7px;width:1.6px;height:36.6px;background:#d6d6d6;"></div>
<div style="left:1915.85px;top:222.7px;width:1.6px;height:36.6px;background:#d6d6d6;"></div>
<div style="left:1981.78px;top:222.7px;width:1.6px;height:36.6px;background:#d6d6d6;"></div>
<div style="left:2047.71px;top:222.7px;width:1.6px;height:36.6px;background:#d6d6d6;"></div>
<div style="left:2113.64px;top:222.7px;width:1.6px;height:36.6px;background:#d6d6d6;"></div>
<div style="left:2179.57px;top:222.7px;width:1.6px;height:36.6px;background:#d6d6d6;"></div>
<div style="left:2245.5px;top:222.7px;width:1.6px;height:36.6px;background:#d6d6d6;"></div>
<svg style="left:1540px;top:227.3px;" width="30" height="30" viewBox="0 0 30 30"><circle cx="12.3" cy="12.3" r="9.7" fill="none" stroke="#36508c" stroke-width="3.6"/><path d="M20.3 20.3 L23.6 23.6" stroke="#36508c" stroke-width="6" stroke-linecap="round"/></svg>
<svg style="left:1606.5px;top:227.5px;" width="27" height="27" viewBox="0 0 27 27"><path d="M0 0 H26.5 V26.5 H0 Z" fill="#c3c3c3"/><rect x="7" y="0" width="14" height="8.5" fill="#fff"/><rect x="15.5" y="1.5" width="3.6" height="5.5" fill="#c3c3c3"/></svg>
<svg style="left:1672.5px;top:231px;" width="28" height="20" viewBox="0 0 28 20"><path d="M0.3 9.3 L13 0.3 V5.8 C21 5.8 26 10 27.2 18 C23.5 13.8 19.5 12.6 13 12.6 V18.3 Z" fill="#36508c"/></svg>
<svg style="left:1737.3px;top:231px;" width="28" height="20" viewBox="0 0 28 20"><path d="M27.7 9.3 L15 0.3 V5.8 C7 5.8 2 10 0.8 18 C4.5 13.8 8.5 12.6 15 12.6 V18.3 Z" fill="#c3c3c3"/></svg>
<svg style="left:1805.5px;top:227px;" width="24" height="28" viewBox="0 0 24 28"><g fill="none" stroke="#36508c" stroke-width="2.3"><path d="M5 0.5 L15.5 19.5 M18.5 0.5 L8 19.5"/><circle cx="5.2" cy="22.2" r="3.9"/><circle cx="18.3" cy="22.2" r="3.9"/></g></svg>
<svg style="left:1871px;top:227.5px;" width="25" height="28" viewBox="0 0 25 28"><rect x="1.2" y="1.2" width="17" height="20" fill="#36508c" stroke="#36508c" stroke-width="2.4"/><rect x="5.8" y="5.8" width="17" height="20.5" fill="#fff" stroke="#36508c" stroke-width="2.4"/><path d="M9 12 H19.5 M9 16 H19.5 M9 20 H19.5" stroke="#36508c" stroke-width="1.8"/></svg>
<svg style="left:1936px;top:227.5px;" width="27" height="28" viewBox="0 0 27 28"><rect x="0" y="0" width="18.6" height="23.5" fill="#36508c"/><rect x="4" y="1.6" width="10" height="2" fill="#fff"/><rect x="15" y="8.5" width="10.5" height="17.5" fill="#fff" stroke="#36508c" stroke-width="1.8"/></svg>
<svg style="left:2000.5px;top:227px;" width="30" height="28" viewBox="0 0 30 28"><path d="M2 2 L26.5 26 M26.5 2 L2 26" stroke="#e8000b" stroke-width="5"/></svg>
<svg style="left:2067px;top:227px;" width="28" height="28" viewBox="0 0 28 28"><path d="M1.5 27 L12 0.5 H17 L6.5 27 Z M11.5 27 L22 0.5 H27 L16.5 27 Z" fill="#36508c"/></svg>
<svg style="left:2134px;top:227.5px;" width="27" height="27" viewBox="0 0 27 27"><rect x="1" y="1" width="24.5" height="24.5" fill="#fff" stroke="#36508c" stroke-width="2"/><rect x="0" y="0" width="26.5" height="4" fill="#36508c"/><rect x="9.3" y="4" width="8" height="20.5" fill="#5878c0"/><path d="M1 11.3 H9.3 M1 18 H9.3 M17.3 11.3 H25.5 M17.3 18 H25.5" stroke="#36508c" stroke-width="2"/></svg>
<svg style="left:2203.5px;top:227px;" width="20" height="29" viewBox="0 0 20 29"><path d="M9.5 1.2 C4 1.2 1.2 5.2 1.2 9.6 C1.2 14 5 16 5.6 21 H13.4 C14 16 17.8 14 17.8 9.6 C17.8 5.2 15 1.2 9.5 1.2 Z" fill="#fff" stroke="#4a64a0" stroke-width="2"/><rect x="5.4" y="23.3" width="8.2" height="3" fill="#36508c"/></svg>
<svg style="left:2755px;top:227.5px;" width="27" height="27" viewBox="0 0 26 26"><path d="M11.51 0.09 L14.49 0.09 L15.59 3.65 L17.78 4.56 L21.08 2.81 L23.19 4.92 L21.44 8.22 L22.35 10.41 L25.91 11.51 L25.91 14.49 L22.35 15.59 L21.44 17.78 L23.19 21.08 L21.08 23.19 L17.78 21.44 L15.59 22.35 L14.49 25.91 L11.51 25.91 L10.41 22.35 L8.22 21.44 L4.92 23.19 L2.81 21.08 L4.56 17.78 L3.65 15.59 L0.09 14.49 L0.09 11.51 L3.65 10.41 L4.56 8.22 L2.81 4.92 L4.92 2.81 L8.22 4.56 L10.41 3.65Z" fill="#36508c"/><circle cx="13" cy="13" r="4.3" fill="#fff"/></svg>
<div style="left:1522px;top:271.5px;width:1279px;height:3.5px;background:#e4e4e4;"></div>
<div style="left:1608px;top:403px;width:1147.5px;height:661px;background:#a3b2ef;"></div>
<div style="left:1608px;top:979.5px;width:344px;height:31.5px;background:#aba9b6;"></div>
<div style="left:2755.5px;top:275px;width:25px;height:789px;background:#fafafa;border-left:1px solid #ececec;box-sizing:border-box;"></div>
<svg style="left:2758.7px;top:283.3px;" width="20" height="13" viewBox="0 0 20 13"><path d="M1.5 10.5 L9.7 2.3 L18 10.5" fill="none" stroke="#666" stroke-width="3.2"/></svg>
<svg style="left:2758.7px;top:1044.3px;" width="20" height="13" viewBox="0 0 20 13"><path d="M1.5 1.5 L9.7 9.7 L18 1.5" fill="none" stroke="#666" stroke-width="3.2"/></svg>
<div style="left:2760.2px;top:603px;width:15.5px;height:397px;background:#c1c1c1;border-radius:8px;"></div>
<div style="left:2781.5px;top:275px;width:19px;height:18.5px;background:#ead42c;"></div>
<div style="left:2781.5px;top:970px;width:16.5px;height:5.5px;background:#ead42c;"></div>
<div style="left:1608px;top:1064px;width:1147.5px;height:26px;background:#fafafa;"></div>
<svg style="left:1617px;top:1069px;" width="14" height="22" viewBox="0 0 14 22"><path d="M11 1.5 L2.5 10.5 L11 19.5" fill="none" stroke="#555" stroke-width="3"/></svg>
<svg style="left:2735.5px;top:1069px;" width="14" height="22" viewBox="0 0 14 22"><path d="M2.5 1.5 L11 10.5 L2.5 19.5" fill="none" stroke="#555" stroke-width="3"/></svg>
<div style="left:1522px;top:275px;width:1233.5px;height:789px;overflow:hidden;">
<div style="left:56.4px;top:0px;width:2px;height:800px;background:transparent;background-image:repeating-linear-gradient(180deg,transparent 0 3px,#7e7e7e 3px 8px,transparent 8px 13.25px);"></div>
<div class="m" style="left:13.3px;top:6.39px;color:#707070;">19</div>
<div class="m" style="left:85.8px;top:6.39px;color:#111;"><i style="color:#7e7e7e">//</i></div>
<div class="m" style="left:13.3px;top:38.39px;color:#707070;">20</div>
<div class="m" style="left:85.8px;top:38.39px;color:#111;"><i style="color:#7e7e7e">//////////////////////////////////////////////////////////////////////////////////</i></div>
<div class="m" style="left:13.3px;top:70.39px;color:#707070;">21</div>
<div class="m" style="left:85.8px;top:70.39px;color:#111;"></div>
<div class="m" style="left:13.3px;top:102.39px;color:#707070;">22</div>
<div class="m" style="left:85.8px;top:102.39px;color:#111;"></div>
<div class="m" style="left:13.3px;top:134.39px;color:#707070;">23</div>
<div class="m" style="left:85.8px;top:134.39px;color:#111;"><span class="k">module</span> alchitry_top{</div>
<div class="m" style="left:13.3px;top:166.39px;color:#707070;">24</div>
<div class="m" style="left:85.8px;top:166.39px;color:#111;">    <span class="k">input</span> clk,</div>
<div class="m" style="left:13.3px;top:198.39px;color:#707070;">25</div>
<div class="m" style="left:85.8px;top:198.39px;color:#111;">    <span class="k">input</span> <b>wire</b> rst_n,</div>
<div class="m" style="left:13.3px;top:230.39px;color:#707070;">26</div>
<div class="m" style="left:85.8px;top:230.39px;color:#111;">    <span class="k">output</span> <b>reg</b> [7:0] led,</div>
<div class="m" style="left:13.3px;top:262.39px;color:#707070;">27</div>
<div class="m" style="left:85.8px;top:262.39px;color:#111;">    <span class="k">input</span> <b>wire</b> usb_rx,</div>
<div class="m" style="left:13.3px;top:294.39px;color:#707070;">28</div>
<div class="m" style="left:85.8px;top:294.39px;color:#111;">    <span class="k">output</span> <b>reg</b> usb_tx,</div>
<div class="m" style="left:13.3px;top:326.39px;color:#707070;">29</div>
<div class="m" style="left:85.8px;top:326.39px;color:#111;">    <span class="k">output</span> <b>reg</b> [2:0][7:0] io_led,</div>
<div class="m" style="left:13.3px;top:358.39px;color:#707070;">30</div>
<div class="m" style="left:85.8px;top:358.39px;color:#111;">    <span class="k">output</span> <b>reg</b> [7:0] io_segment,</div>
<div class="m" style="left:13.3px;top:390.39px;color:#707070;">31</div>
<div class="m" style="left:85.8px;top:390.39px;color:#111;">    <span class="k">output</span> <b>reg</b> [3:0] io_select,</div>
<div class="m" style="left:13.3px;top:422.39px;color:#707070;">32</div>
<div class="m" style="left:85.8px;top:422.39px;color:#111;">    <span class="k">input</span> <b>wire</b> [4:0] io_button,</div>
<div class="m" style="left:13.3px;top:454.39px;color:#707070;">33</div>
<div class="m" style="left:85.8px;top:454.39px;color:#111;">    <span class="k">input</span> <b>wire</b> [2:0][7:0] io_dip</div>
<div class="m" style="left:13.3px;top:486.39px;color:#707070;">34</div>
<div class="m" style="left:85.8px;top:486.39px;color:#111;">    );</div>
<div class="m" style="left:13.3px;top:518.39px;color:#707070;">35</div>
<div class="m" style="left:85.8px;top:518.39px;color:#111;"></div>
<div class="m" style="left:13.3px;top:550.39px;color:#707070;">36</div>
<div class="m" style="left:85.8px;top:550.39px;color:#111;">    <span class="k">always @</span>* <span class="k">begin</span></div>
<div class="m" style="left:13.3px;top:582.39px;color:#707070;">37</div>
<div class="m" style="left:85.8px;top:582.39px;color:#111;">        led = 8'h<span class="n">0</span>;</div>
<div class="m" style="left:13.3px;top:614.39px;color:#707070;">38</div>
<div class="m" style="left:85.8px;top:614.39px;color:#111;">        usb_tx = usb_rx;</div>
<div class="m" style="left:13.3px;top:646.39px;color:#707070;">39</div>
<div class="m" style="left:85.8px;top:646.39px;color:#111;">        io_led = {8'h<span class="n">0</span>, 8'h<span class="n">0</span>, 8'h<span class="n">0</span>};</div>
<div class="m" style="left:13.3px;top:678.39px;color:#707070;">40</div>
<div class="m" style="left:85.8px;top:678.39px;color:#111;">        io_segment = 8'h<span class="n">ff</span>;</div>
<div class="m" style="left:13.3px;top:710.39px;color:#707070;">41</div>
<div class="m" style="left:85.8px;top:710.39px;color:#111;">        io_select = 4'h<span class="n">ff</span>;</div>
<div class="m" style="left:13.3px;top:742.39px;color:#707070;">42</div>
<div class="m" style="left:85.8px;top:742.39px;color:#111;">    <span class="k">end</span></div>
<div class="m" style="left:13.3px;top:774.39px;color:#707070;">43</div>
<div class="m" style="left:85.8px;top:774.39px;color:#111;"><span class="k">endmodule</span></div>
<svg style="left:46.3px;top:35px;" width="23" height="32" viewBox="0 0 23 32"><rect x="8" y="0" width="7" height="32" fill="#fff"/><path d="M2 22 V11.5 L11.2 3.5 L20.5 11.5 V22 Q20.5 25 17.5 25 H5 Q2 25 2 22 Z" stroke="#a6a6a6" stroke-width="1.7" fill="#fff"/><path d="M11.2 0 V3.5 M11.2 25 V31" stroke="#a6a6a6" stroke-width="1.7"/><path d="M6.3 15.5 H16.2" stroke="#909090" stroke-width="1.8"/></svg>
<svg style="left:46.3px;top:131px;" width="23" height="32" viewBox="0 0 23 32"><rect x="8" y="0" width="7" height="32" fill="#fff"/><path d="M2 6.5 Q2 3.5 5 3.5 H17.5 Q20.5 3.5 20.5 6.5 V17 L11.2 25 L2 17 Z" stroke="#a6a6a6" stroke-width="1.7" fill="#fff"/><path d="M11.2 1 V3.5" stroke="#a6a6a6" stroke-width="1.7"/><path d="M6.3 13 H16.2" stroke="#909090" stroke-width="1.8"/></svg>
<svg style="left:46.3px;top:547px;" width="23" height="32" viewBox="0 0 23 32"><rect x="8" y="0" width="7" height="32" fill="#fff"/><path d="M2 6.5 Q2 3.5 5 3.5 H17.5 Q20.5 3.5 20.5 6.5 V17 L11.2 25 L2 17 Z" stroke="#a6a6a6" stroke-width="1.7" fill="#fff"/><path d="M11.2 1 V3.5" stroke="#a6a6a6" stroke-width="1.7"/><path d="M6.3 13 H16.2" stroke="#909090" stroke-width="1.8"/></svg>
<svg style="left:46.3px;top:739px;" width="23" height="32" viewBox="0 0 23 32"><rect x="8" y="0" width="7" height="32" fill="#fff"/><path d="M2 22 V11.5 L11.2 3.5 L20.5 11.5 V22 Q20.5 25 17.5 25 H5 Q2 25 2 22 Z" stroke="#a6a6a6" stroke-width="1.7" fill="#fff"/><path d="M11.2 0 V3.5 M11.2 25 V31" stroke="#a6a6a6" stroke-width="1.7"/><path d="M6.3 15.5 H16.2" stroke="#909090" stroke-width="1.8"/></svg>
<svg style="left:46.3px;top:771px;" width="23" height="32" viewBox="0 0 23 32"><rect x="8" y="0" width="7" height="32" fill="#fff"/><path d="M2 22 V11.5 L11.2 3.5 L20.5 11.5 V22 Q20.5 25 17.5 25 H5 Q2 25 2 22 Z" stroke="#a6a6a6" stroke-width="1.7" fill="#fff"/><path d="M11.2 0 V3.5 M11.2 25 V31" stroke="#a6a6a6" stroke-width="1.7"/><path d="M6.3 15.5 H16.2" stroke="#909090" stroke-width="1.8"/></svg>
<div style="left:87px;top:128.5px;width:3px;height:31px;background:#000;"></div>
</div>
<div style="left:533px;top:1120.5px;width:2273.5px;height:387.5px;background:#ececec;border:2px solid #cfcfcf;border-bottom:none;box-sizing:border-box;"></div>
<div style="left:538.5px;top:1177px;width:2262px;height:331px;background:#fff;"></div>
<div style="left:1145px;top:1127px;width:245.3px;height:50.5px;background:#fff;"></div>
<div class="t" style="left:549.8px;top:1138.68px;font-size:24px;letter-spacing:1.598px;color:#948f95;font-weight:bold;">Tcl Console</div>
<div class="t" style="left:742.5px;top:1138.68px;font-size:24px;letter-spacing:2.783px;color:#948f95;font-weight:bold;">Messages</div>
<div class="t" style="left:919.5px;top:1138.68px;font-size:24px;letter-spacing:1.866px;color:#948f95;font-weight:bold;">Log</div>
<div class="t" style="left:1010px;top:1138.68px;font-size:24px;letter-spacing:2.171px;color:#948f95;font-weight:bold;">Reports</div>
<div class="t" style="left:1157.3px;top:1138.68px;font-size:24px;letter-spacing:1.664px;color:#111;font-weight:bold;">Design Runs</div>
<svg style="left:1361.6px;top:1144.2px;" width="18" height="17" viewBox="0 0 18 17"><path d="M2 2 L16 15 M16 2 L2 15" stroke="#7c7c7c" stroke-width="2.2" fill="none"/></svg>
<div style="left:727.3px;top:1127px;width:2.8px;height:42px;background:#c2c2c2;"></div>
<div style="left:905.1px;top:1127px;width:2.8px;height:42px;background:#c2c2c2;"></div>
<div style="left:995.6px;top:1127px;width:2.8px;height:42px;background:#c2c2c2;"></div>
<div style="left:1142.9px;top:1127px;width:2.8px;height:42px;background:#c2c2c2;"></div>
<div class="t" style="left:2652.5px;top:1138.34px;font-size:25px;color:#858585;font-weight:bold;transform:scaleX(1.22);transform-origin:0 0;">?</div>
<div style="left:2689.5px;top:1156px;width:19px;height:3px;background:#858585;"></div>
<div style="left:2727px;top:1140.5px;width:19px;height:19px;background:transparent;border:3px solid #858585;box-sizing:border-box;"></div>
<svg style="left:2764.5px;top:1139.5px;" width="21" height="21" viewBox="0 0 21 21"><path d="M9.3 2.5 H1.5 V18.5 H17.5 V10.5" fill="none" stroke="#858585" stroke-width="3"/><path d="M10.3 7.6 L15.2 1.6 L19 1 L18.4 4.8 L12.2 9.4 Z" fill="#858585"/></svg>
<div style="left:603.2px;top:1188.7px;width:1.6px;height:37.3px;background:#d6d6d6;"></div>
<div style="left:669.1px;top:1188.7px;width:1.6px;height:37.3px;background:#d6d6d6;"></div>
<div style="left:735px;top:1188.7px;width:1.6px;height:37.3px;background:#d6d6d6;"></div>
<div style="left:800.9px;top:1188.7px;width:1.6px;height:37.3px;background:#d6d6d6;"></div>
<div style="left:866.8px;top:1188.7px;width:1.6px;height:37.3px;background:#d6d6d6;"></div>
<div style="left:932.7px;top:1188.7px;width:1.6px;height:37.3px;background:#d6d6d6;"></div>
<div style="left:998.6px;top:1188.7px;width:1.6px;height:37.3px;background:#d6d6d6;"></div>
<div style="left:1064.5px;top:1188.7px;width:1.6px;height:37.3px;background:#d6d6d6;"></div>
<div style="left:1130.4px;top:1188.7px;width:1.6px;height:37.3px;background:#d6d6d6;"></div>
<svg style="left:557.3px;top:1193.6px;" width="30" height="30" viewBox="0 0 30 30"><circle cx="12.3" cy="12.3" r="9.7" fill="none" stroke="#36508c" stroke-width="3.6"/><path d="M20.3 20.3 L23.6 23.6" stroke="#36508c" stroke-width="6" stroke-linecap="round"/></svg>
<svg style="left:625.3px;top:1193.8px;" width="24" height="28" viewBox="0 0 24 28"><path d="M0.5 0 H22.5 L11.5 8.5 Z M0.5 26.5 H22.5 L11.5 18 Z" fill="#36508c"/><rect x="0" y="11.3" width="23" height="3.8" fill="#36508c"/></svg>
<svg style="left:691.2px;top:1193.8px;" width="24" height="28" viewBox="0 0 24 28"><path d="M1 8.5 H22 L11.5 0 Z M1 18.5 H22 L11.5 27 Z" fill="#36508c"/><rect x="0" y="10.6" width="23" height="2.4" fill="#36508c"/><rect x="0" y="14.2" width="23" height="2.4" fill="#36508c"/></svg>
<svg style="left:757px;top:1193.5px;" width="24" height="28" viewBox="0 0 24 28"><rect x="0.3" y="0.5" width="5.8" height="26.5" fill="#c3c3c3"/><path d="M22.7 1 V26.5 L9.3 13.8 Z" fill="#c3c3c3"/></svg>
<svg style="left:820.5px;top:1195px;" width="30" height="24" viewBox="0 0 30 24"><path d="M12.5 1.5 L3.5 11.5 L12.5 21.5 M25 1.5 L16 11.5 L25 21.5" fill="none" stroke="#c3c3c3" stroke-width="5"/></svg>
<svg style="left:889px;top:1193.2px;" width="24" height="28" viewBox="0 0 24 28"><path d="M0.3 0.5 L21.5 13.6 L0.3 26.7 Z" fill="#c3c3c3"/></svg>
<svg style="left:951.5px;top:1195px;" width="30" height="24" viewBox="0 0 30 24"><path d="M3.5 1.5 L12.5 11.5 L3.5 21.5 M16 1.5 L25 11.5 L16 21.5" fill="none" stroke="#c3c3c3" stroke-width="5"/></svg>
<svg style="left:1019.2px;top:1193.3px;" width="27" height="27" viewBox="0 0 27 27"><path d="M13.3 0 V26.5 M0 13.3 H26.5" stroke="#36508c" stroke-width="5.4"/></svg>
<svg style="left:1083px;top:1193px;" width="30" height="30" viewBox="0 0 30 30"><g fill="none" stroke="#36508c"><circle cx="8.2" cy="8" r="4.6" stroke-width="3.2"/><circle cx="21.6" cy="21.5" r="4.6" stroke-width="3.2"/><path d="M4.3 25.3 L25.6 3.8" stroke-width="2.6"/></g></svg>
<div style="left:538.5px;top:1238px;width:2262px;height:43px;background:#ececec;"></div>
<div style="left:742.1px;top:1242px;width:1.6px;height:39px;background:#dcdcdc;"></div>
<div style="left:742.1px;top:1281px;width:1.6px;height:82px;background:#e7e7e7;"></div>
<div style="left:911.3px;top:1242px;width:1.6px;height:39px;background:#dcdcdc;"></div>
<div style="left:911.3px;top:1281px;width:1.6px;height:82px;background:#e7e7e7;"></div>
<div style="left:1099.9px;top:1242px;width:1.6px;height:39px;background:#dcdcdc;"></div>
<div style="left:1099.9px;top:1281px;width:1.6px;height:82px;background:#e7e7e7;"></div>
<div style="left:1186.5px;top:1242px;width:1.6px;height:39px;background:#dcdcdc;"></div>
<div style="left:1186.5px;top:1281px;width:1.6px;height:82px;background:#e7e7e7;"></div>
<div style="left:1265.7px;top:1242px;width:1.6px;height:39px;background:#dcdcdc;"></div>
<div style="left:1265.7px;top:1281px;width:1.6px;height:82px;background:#e7e7e7;"></div>
<div style="left:1352.3px;top:1242px;width:1.6px;height:39px;background:#dcdcdc;"></div>
<div style="left:1352.3px;top:1281px;width:1.6px;height:82px;background:#e7e7e7;"></div>
<div style="left:1431.5px;top:1242px;width:1.6px;height:39px;background:#dcdcdc;"></div>
<div style="left:1431.5px;top:1281px;width:1.6px;height:82px;background:#e7e7e7;"></div>
<div style="left:1530.9px;top:1242px;width:1.6px;height:39px;background:#dcdcdc;"></div>
<div style="left:1530.9px;top:1281px;width:1.6px;height:82px;background:#e7e7e7;"></div>
<div style="left:1628.9px;top:1242px;width:1.6px;height:39px;background:#dcdcdc;"></div>
<div style="left:1628.9px;top:1281px;width:1.6px;height:82px;background:#e7e7e7;"></div>
<div style="left:1800.4px;top:1242px;width:1.6px;height:39px;background:#dcdcdc;"></div>
<div style="left:1800.4px;top:1281px;width:1.6px;height:82px;background:#e7e7e7;"></div>
<div style="left:1994.5px;top:1242px;width:1.6px;height:39px;background:#dcdcdc;"></div>
<div style="left:1994.5px;top:1281px;width:1.6px;height:82px;background:#e7e7e7;"></div>
<div style="left:2178.6px;top:1242px;width:1.6px;height:39px;background:#dcdcdc;"></div>
<div style="left:2178.6px;top:1281px;width:1.6px;height:82px;background:#e7e7e7;"></div>
<div style="left:2335.1px;top:1242px;width:1.6px;height:39px;background:#dcdcdc;"></div>
<div style="left:2335.1px;top:1281px;width:1.6px;height:82px;background:#e7e7e7;"></div>
<div style="left:2570.7px;top:1242px;width:1.6px;height:39px;background:#dcdcdc;"></div>
<div style="left:2570.7px;top:1281px;width:1.6px;height:82px;background:#e7e7e7;"></div>
<div style="left:2646.3px;top:1242px;width:1.6px;height:39px;background:#dcdcdc;"></div>
<div style="left:2646.3px;top:1281px;width:1.6px;height:82px;background:#e7e7e7;"></div>
<div style="left:2706.7px;top:1242px;width:1.6px;height:39px;background:#dcdcdc;"></div>
<div style="left:2706.7px;top:1281px;width:1.6px;height:82px;background:#e7e7e7;"></div>
<div style="left:538.5px;top:1320.5px;width:2262px;height:1.6px;background:#e7e7e7;"></div>
<div style="left:538.5px;top:1362px;width:2262px;height:1.6px;background:#e4e4e4;"></div>
<div class="t" style="left:552.7px;top:1249.28px;font-size:24px;letter-spacing:0.761px;color:#222;">Name</div>
<div class="t" style="left:757.1px;top:1249.28px;font-size:24px;letter-spacing:1.243px;color:#222;">Constraints</div>
<div class="t" style="left:926.3px;top:1249.28px;font-size:24px;letter-spacing:1.451px;color:#222;">Status</div>
<div class="t" style="left:1114.9px;top:1249.28px;font-size:24px;letter-spacing:-0.450px;color:#222;transform:scaleX(0.9201);transform-origin:0 0;">WNS</div>
<div class="t" style="left:1201.5px;top:1249.28px;font-size:24px;letter-spacing:-0.450px;color:#222;transform:scaleX(0.9427);transform-origin:0 0;">TNS</div>
<div class="t" style="left:1280.7px;top:1249.28px;font-size:24px;letter-spacing:-0.450px;color:#222;transform:scaleX(0.9328);transform-origin:0 0;">WHS</div>
<div class="t" style="left:1367.3px;top:1249.28px;font-size:24px;letter-spacing:-0.450px;color:#222;transform:scaleX(0.9257);transform-origin:0 0;">THS</div>
<div class="t" style="left:1446.5px;top:1249.28px;font-size:24px;letter-spacing:-0.450px;color:#222;transform:scaleX(0.9243);transform-origin:0 0;">WBSS</div>
<div class="t" style="left:1545.9px;top:1249.28px;font-size:24px;letter-spacing:-0.450px;color:#222;transform:scaleX(0.9207);transform-origin:0 0;">TPWS</div>
<div class="t" style="left:1643.9px;top:1249.28px;font-size:24px;letter-spacing:1.181px;color:#222;">Total Power</div>
<div class="t" style="left:1815.4px;top:1249.28px;font-size:24px;letter-spacing:0.863px;color:#222;">Failed Routes</div>
<div class="t" style="left:2009.5px;top:1249.28px;font-size:24px;letter-spacing:1.359px;color:#222;">Methodology</div>
<div class="t" style="left:2193.6px;top:1249.28px;font-size:24px;letter-spacing:0.130px;color:#222;">RQA Score</div>
<div class="t" style="left:2350.1px;top:1249.28px;font-size:24px;letter-spacing:0.886px;color:#222;">QoR Suggestions</div>
<div class="t" style="left:2585.7px;top:1249.28px;font-size:24px;letter-spacing:-0.450px;color:#222;transform:scaleX(0.9228);transform-origin:0 0;">LUT</div>
<div class="t" style="left:2661.3px;top:1249.28px;font-size:24px;letter-spacing:-0.450px;color:#222;transform:scaleX(0.8662);transform-origin:0 0;">FF</div>
<div class="t" style="left:2721.7px;top:1249.28px;font-size:24px;letter-spacing:-0.450px;color:#222;transform:scaleX(0.9322);transform-origin:0 0;">BRAM</div>
<svg style="left:548.5px;top:1294.3px;" width="20" height="12" viewBox="0 0 20 12"><path d="M1.5 1.5 L9.3 9.5 L17 1.5" fill="none" stroke="#555" stroke-width="2.2"/></svg>
<svg style="left:583px;top:1287.5px;" width="20" height="24" viewBox="0 0 20 24"><path d="M1.2 1.8 L17.5 12 L1.2 22.2 Z" fill="#fff" stroke="#b2b2b2" stroke-width="1.7"/></svg>
<div class="t" style="left:617px;top:1286.58px;font-size:24px;letter-spacing:0.242px;color:#1b1b1b;">synth_1</div>
<svg style="left:613px;top:1328.5px;" width="20" height="24" viewBox="0 0 20 24"><path d="M1.2 1.8 L17.5 12 L1.2 22.2 Z" fill="#fff" stroke="#b2b2b2" stroke-width="1.7"/></svg>
<div class="t" style="left:646.8px;top:1327.58px;font-size:24px;letter-spacing:-0.338px;color:#1b1b1b;">impl_1</div>
<div class="t" style="left:757.8px;top:1286.58px;font-size:24px;letter-spacing:1.027px;color:#1b1b1b;">constrs_1</div>
<div class="t" style="left:927.4px;top:1286.58px;font-size:24px;letter-spacing:1.641px;color:#1b1b1b;">Not started</div>
<div class="t" style="left:757.8px;top:1327.58px;font-size:24px;letter-spacing:1.027px;color:#1b1b1b;">constrs_1</div>
<div class="t" style="left:927.4px;top:1327.58px;font-size:24px;letter-spacing:1.641px;color:#1b1b1b;">Not started</div>
</body></html>
